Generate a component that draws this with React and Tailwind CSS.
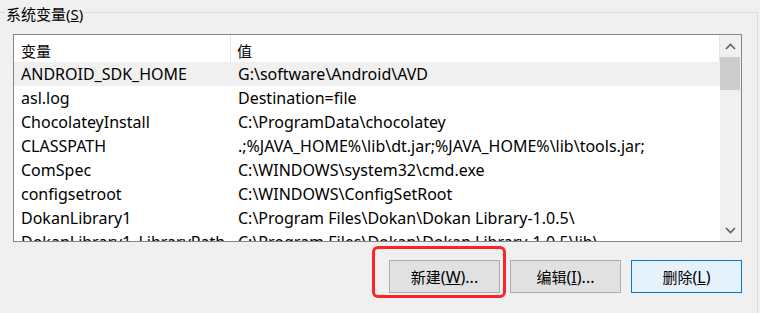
import React from 'react';

const rows = [
  ['ANDROID_SDK_HOME', 'G:\\software\\Android\\AVD'],
  ['asl.log', 'Destination=file'],
  ['ChocolateyInstall', 'C:\\ProgramData\\chocolatey'],
  ['CLASSPATH', '.;%JAVA_HOME%\\lib\\dt.jar;%JAVA_HOME%\\lib\\tools.jar;'],
  ['ComSpec', 'C:\\WINDOWS\\system32\\cmd.exe'],
  ['configsetroot', 'C:\\WINDOWS\\ConfigSetRoot'],
  ['DokanLibrary1', 'C:\\Program Files\\Dokan\\Dokan Library-1.0.5\\'],
  ['DokanLibrary1_LibraryPath_x86', 'C:\\Program Files\\Dokan\\Dokan Library-1.0.5\\lib\\'],
];

const font = { fontFamily: '"Noto Sans", "Noto Sans CJK SC", sans-serif' };

const Chevron = ({ up }) => (
  <svg width="11" height="7" viewBox="0 0 11 7">
    <polyline
      points={up ? '1,6 5.5,1.5 10,6' : '1,1 5.5,5.5 10,1'}
      fill="none"
      stroke="#606060"
      strokeWidth="1.6"
    />
  </svg>
);

const Button = ({ label, hotkey, dots, active }) => (
  <button
    className={
      active
        ? 'w-[111px] h-[33px] border border-[#0078d7] bg-[#e5f1fb] text-[15px] text-black'
        : 'w-[111px] h-[33px] border border-[#adadad] bg-[#e1e1e1] text-[15px] text-black'
    }
  >
    {label}
    <span className="text-[16px]">
      (<span className="underline">{hotkey}</span>){dots ? '...' : ''}
    </span>
  </button>
);

export default function App() {
  return (
    <div
      className="relative w-[760px] h-[313px] overflow-hidden bg-[#f0f0f0] text-black antialiased"
      style={font}
    >
      <div className="mt-[12px] w-[758px] h-[320px] border-t border-r border-[#dcdcdc] pl-[13px] pr-[15px] pt-[21px]">
        <div className="flex h-[208px] border border-[#828790] bg-white">
          <div className="flex-1 flex flex-col overflow-hidden">
            <div className="flex h-[27px] shrink-0 border-r border-[#e5e5e5] text-[15px]">
              <div className="w-[217px] shrink-0 pl-[7px] pt-[5px] border-r border-[#e5e5e5]">变量</div>
              <div className="flex-1 pl-[6px] pt-[5px]">值</div>
            </div>
            {rows.map(([name, value], i) => (
              <div
                key={name}
                className={
                  i === 0
                    ? 'flex h-[24px] shrink-0 items-center bg-[#f0f0f0] text-[16px] whitespace-nowrap'
                    : 'flex h-[24px] shrink-0 items-center text-[16px] whitespace-nowrap'
                }
              >
                <div className="w-[217px] shrink-0 pl-[7px] overflow-hidden">{name}</div>
                <div className="flex-1 pl-[7px] overflow-hidden">{value}</div>
              </div>
            ))}
          </div>
          <div className="w-[21px] shrink-0 bg-[#f0f0f0] flex flex-col">
            <div className="h-[22px] flex items-center justify-center">
              <Chevron up />
            </div>
            <div className="h-[33px] mr-[1px] bg-[#cdcdcd]" />
            <div className="flex-1" />
            <div className="h-[22px] flex items-center justify-center">
              <Chevron />
            </div>
          </div>
        </div>
        <div className="flex justify-end gap-[10px] mt-[18px]">
          <Button label="新建" hotkey="W" dots />
          <Button label="编辑" hotkey="I" dots />
          <Button label="删除" hotkey="L" active />
        </div>
      </div>

      <span className="absolute left-[5px] top-[3px] px-[1px] bg-[#f0f0f0] text-[15px]">
        系统变量(<span className="underline">S</span>)
      </span>

      <div className="absolute left-[372px] top-[246px] w-[134px] h-[52px] border-[3px] border-[#ff2424] rounded-[6px]" />
    </div>
  );
}
